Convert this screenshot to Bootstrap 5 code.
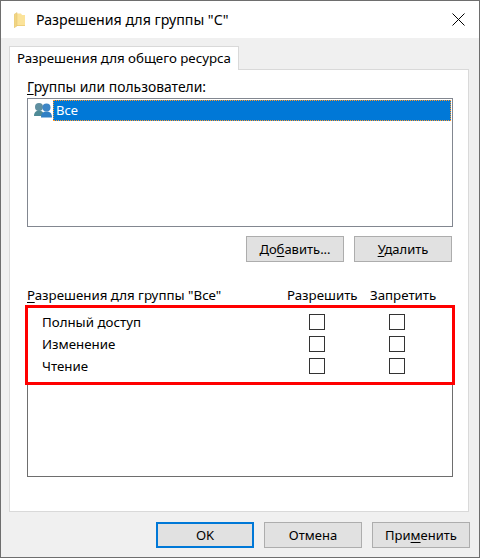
<!DOCTYPE html>
<html lang="ru">
<head>
<meta charset="utf-8">
<link href="https://cdn.jsdelivr.net/npm/bootstrap@5.3.0/dist/css/bootstrap.min.css" rel="stylesheet">
<style>
html,body{margin:0;height:558px;overflow:hidden;background:#fff}
body{font-family:"Noto Sans","Liberation Sans",sans-serif;font-size:13.3px;line-height:16px;color:#000}
.win{width:480px;height:558px;border:1px solid #6e6e6e;background:#f0f0f0;display:flex;flex-direction:column}
.titlebar{height:37px;flex:none;background:#fff;padding:0 0 0 13px;display:flex;align-items:center;gap:11px;font-size:14.2px}
.closex{margin-left:auto;margin-right:14px;display:block}
.body-area{flex:1;padding:8px 8px 0 8px;display:flex;flex-direction:column}
.tabhead{height:24px;width:230px;background:#fff;border:1px solid #d9d9d9;border-bottom:0;padding:3px 0 0 7px;position:relative;z-index:1;margin-bottom:-1px;white-space:nowrap}
.tabpage{height:443px;width:460px;background:#fff;border:1px solid #d9d9d9;padding:9px 0 0 17px;flex:none}
.lbl{height:16px;white-space:nowrap;font-size:13.9px}
.usr{text-decoration:underline;text-underline-offset:2px}
.listing{border:1px solid #828790;background:#fff;height:129px;margin-top:3px;padding:1px;width:426px}
.sel-row{display:flex;align-items:center;height:21px;padding-left:5px}
.sel-txt{flex:1;height:21px;background:#0078d7;color:#fff;outline:1px dotted #ff9a2e;outline-offset:-1px;padding:2px 0 0 3px;font-size:13px}
.rowbtns{display:flex;justify-content:flex-end;gap:10px;margin-top:9px;width:425px}
.wbtn{width:98px;height:26px;padding:0;background:#e1e1e1;border:1px solid #adadad;border-radius:0;font-size:13px;line-height:22px;color:#000}
.wbtn.def{border:2px solid #0078d7}
.permhead{display:grid;grid-template-columns:260px 83px 83px;margin-top:25px;width:426px;white-space:nowrap}
.permbox{position:relative;border:1px solid #6e6e6e;width:426px;height:172px;margin-top:2px;padding-top:5px}
.redframe{position:absolute;left:-3px;top:-1px;width:430px;height:80px;border:3px solid #f00;pointer-events:none}
.prow{display:grid;grid-template-columns:267px 80px 16px;height:22px;padding-left:14px;align-items:center;white-space:nowrap}
.cb{width:16px;height:16px;border:1px solid #333;background:#fff}
.foot{display:flex;justify-content:flex-end;gap:10px;margin-top:10px;width:461px}
</style>
</head>
<body>
<div class="win">
  <div class="titlebar">
    <svg width="11" height="16" viewBox="0 0 11 16"><path d="M3 1.500H7L8 3H11V14H3Z" fill="#fbe39a"/><path d="M0 2.500 3 .5V14L0 15.800Z" fill="#f1d583" stroke="#e2c272" stroke-width=".5"/><path d="M3 13.500H11V14H3Z" fill="#e2bc5e"/></svg>
    <span>Разрешения для группы "С"</span>
    <svg class="closex" width="13" height="13" viewBox="0 0 13 13"><path d="M.5.5 12.500 12.500M12.500.5.5 12.500" stroke="#000" stroke-width="1" fill="none"/></svg>
  </div>
  <div class="body-area">
    <div class="tabhead">Разрешения для общего ресурса</div>
    <div class="tabpage">
      <div class="lbl"><span class="usr">Г</span>руппы или пользователи:</div>
      <div class="listing">
        <div class="sel-row">
          <svg width="19" height="17" viewBox="0 0 19 17"><circle cx="5" cy="5" r="4" fill="#5f8fa0"/><path d="M0 14C0 10 2.500 8.500 5 8.500S10 10 10 14Z" fill="#4f8a96"/><circle cx="12.500" cy="5.500" r="4" fill="#3d86c6"/><path d="M7 15.500C7 11 9.500 9.500 12.500 9.500S18 11 18 15.500Z" fill="#2f7fc4"/></svg>
          <div class="sel-txt">Все</div>
        </div>
      </div>
      <div class="rowbtns">
        <button type="button" class="btn wbtn">До<span class="usr">б</span>авить...</button>
        <button type="button" class="btn wbtn"><span class="usr">У</span>далить</button>
      </div>
      <div class="permhead">
        <div><span class="usr">Р</span>азрешения для группы "Все"</div>
        <div>Разрешить</div>
        <div>Запретить</div>
      </div>
      <div class="permbox">
        <div class="redframe"></div>
        <div class="prow"><span>Полный доступ</span><span class="cb"></span><span class="cb"></span></div>
        <div class="prow"><span>Изменение</span><span class="cb"></span><span class="cb"></span></div>
        <div class="prow"><span>Чтение</span><span class="cb"></span><span class="cb"></span></div>
      </div>
    </div>
    <div class="foot">
      <button type="button" class="btn wbtn def">OK</button>
      <button type="button" class="btn wbtn">Отмена</button>
      <button type="button" class="btn wbtn">При<span class="usr">м</span>енить</button>
    </div>
  </div>
</div>
<script src="https://cdn.jsdelivr.net/npm/bootstrap@5.3.0/dist/js/bootstrap.bundle.min.js"></script>
</body>
</html>
